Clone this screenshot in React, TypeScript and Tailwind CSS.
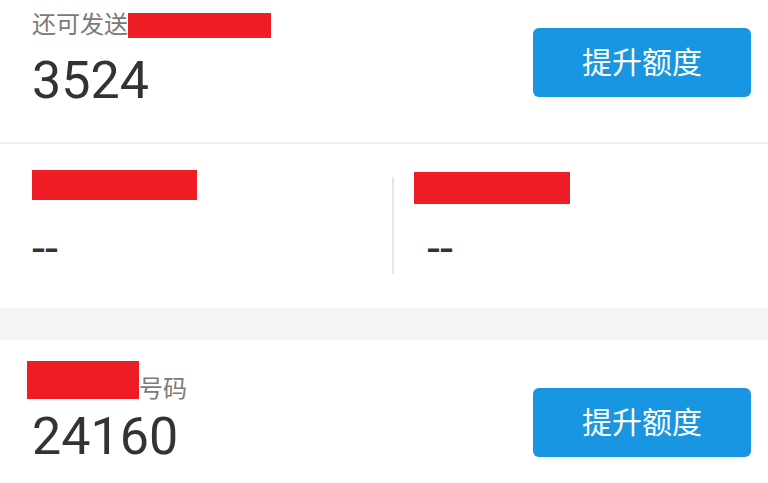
const cjk = "font-['Roboto','Noto_Sans_CJK_SC',sans-serif]";

const Redact = ({ className }: { className: string }) => (
  <div className={`bg-[#ee1c25] ${className}`} />
);

const RaiseButton = ({ className = '' }: { className?: string }) => (
  <button
    className={`flex h-[69px] w-[218px] shrink-0 items-center justify-center rounded-[6px] bg-[#1896e1] text-[30px] text-white ${className}`}
  >
    提升额度
  </button>
);

export default function App() {
  return (
    <div className={`h-[483px] w-[768px] overflow-hidden bg-white ${cjk}`}>
      {/* quota */}
      <div className="flex h-[142px] justify-between pl-8 pr-[17px]">
        <div className="pt-[10px]">
          <div className="flex items-center text-[24px] leading-[30px] text-[#7a7a7a]">
            <span>还可发送</span>
            <Redact className="h-[25px] w-[143px]" />
          </div>
          <div className="mt-[11px] text-[52px] leading-[60px] text-[#333]">3524</div>
        </div>
        <RaiseButton className="mt-[28px]" />
      </div>

      <div className="h-[2px] bg-[#efefef]" />

      {/* stats */}
      <div className="flex h-[164px]">
        <div className="w-[392px] pl-8 pt-[26px]">
          <Redact className="h-[30px] w-[165px]" />
          <div className="mt-[22px] text-[47px] leading-[52px] text-[#333]">--</div>
        </div>
        <div className="mt-[33px] h-[97px] w-[2px] bg-[#e6e6e6]" />
        <div className="flex-1 pl-[20px] pt-[28px]">
          <Redact className="h-[32px] w-[156px]" />
          <div className="mt-[18px] pl-[13px] text-[47px] leading-[52px] text-[#333]">--</div>
        </div>
      </div>

      <div className="h-[32px] bg-[#f4f4f4]" />

      {/* numbers */}
      <div className="flex h-[143px] justify-between pl-[27px] pr-[17px]">
        <div className="pt-[21px]">
          <div className="flex items-end text-[24px] leading-[30px] text-[#7a7a7a]">
            <Redact className="h-[38px] w-[112px]" />
            <span className="translate-y-[3px] leading-[26px]">号码</span>
          </div>
          <div className="mt-[8px] pl-[5px] text-[52px] leading-[60px] text-[#333]">24160</div>
        </div>
        <RaiseButton className="mt-[48px]" />
      </div>
    </div>
  );
}
